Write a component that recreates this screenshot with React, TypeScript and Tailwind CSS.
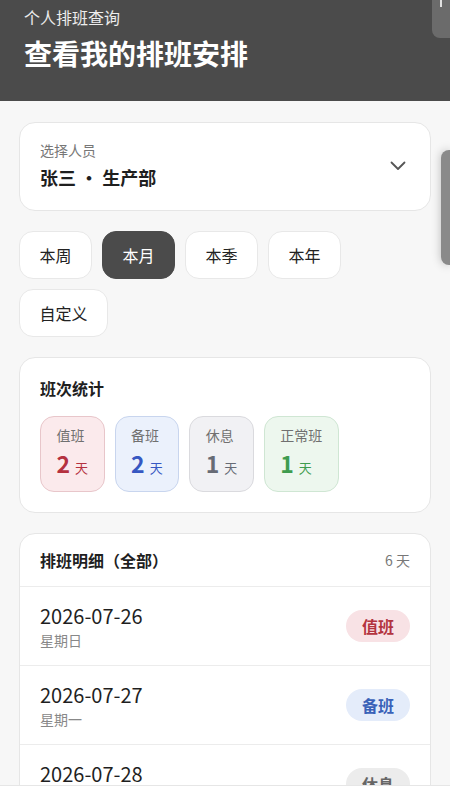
import { useState } from 'react'

const font = { fontFamily: '"Noto Sans CJK SC", "Noto Sans", sans-serif' }

const ranges = ['本周', '本月', '本季', '本年', '自定义']

const stats = [
  { label: '值班', count: 2, box: 'bg-[#fbeaec] border-[#e8c6ca]', num: 'text-[#b5313f]', unit: 'text-[#b5313f]' },
  { label: '备班', count: 2, box: 'bg-[#ebf1fc] border-[#c8d5ee]', num: 'text-[#3658c2]', unit: 'text-[#3658c2]' },
  { label: '休息', count: 1, box: 'bg-[#f1f1f4] border-[#dadade]', num: 'text-[#676b75]', unit: 'text-[#676b75]' },
  { label: '正常班', count: 1, box: 'bg-[#edf7ee] border-[#cfe6d3]', num: 'text-[#3f9c4f]', unit: 'text-[#3f9c4f]' },
]

const rows = [
  { date: '2026-07-26', week: '星期日', type: '值班', badge: 'bg-[#f8e2e5] text-[#b3343f]' },
  { date: '2026-07-27', week: '星期一', type: '备班', badge: 'bg-[#e4ecfa] text-[#3a62b8]' },
  { date: '2026-07-28', week: '星期二', type: '休息', badge: 'bg-[#ececec] text-[#666666]' },
  { date: '2026-07-29', week: '星期三', type: '正常班', badge: 'bg-[#e6f4e8] text-[#3f9c4f]' },
]

export default function App() {
  const [range, setRange] = useState('本月')

  return (
    <div className="min-h-screen bg-[#f7f7f7] pb-10" style={font}>
      {/* header */}
      <div className="bg-[#4b4b4b] px-6 pt-[5px] pb-[30px]">
        <p className="text-[16px] leading-6 text-white/90">个人排班查询</p>
        <h1 className="mt-1.5 text-[28px] leading-9 font-bold text-white">查看我的排班安排</h1>
      </div>

      <div className="flex flex-col gap-5 px-[19px] pt-[21px]">
        {/* person select */}
        <div className="flex items-center justify-between rounded-2xl border border-[#e6e6e6] bg-white pt-[17px] pb-[19px] pl-5 pr-6">
          <div>
            <p className="text-[14px] leading-5 text-[#777777]">选择人员</p>
            <p className="mt-[3px] text-[18px] leading-7 font-bold text-[#1f1f1f]">张三 · 生产部</p>
          </div>
          <svg width="16" height="10" viewBox="0 0 16 10" fill="none">
            <path d="M1.5 1.5 8 8l6.5-6.5" stroke="#555" strokeWidth="1.8" strokeLinecap="round" strokeLinejoin="round" />
          </svg>
        </div>

        {/* range tabs */}
        <div className="flex flex-wrap gap-[10px]">
          {ranges.map((r) => (
            <button
              key={r}
              onClick={() => setRange(r)}
              className={
                r === range
                  ? 'rounded-[14px] border border-[#4b4b4b] bg-[#4b4b4b] px-[19.5px] py-[11px] text-[16px] leading-6 text-white'
                  : 'rounded-[14px] border border-[#e8e8e8] bg-white px-[19.5px] py-[11px] text-[16px] leading-6 text-[#222222]'
              }
            >
              {r}
            </button>
          ))}
        </div>

        {/* stats */}
        <div className="rounded-2xl border border-[#e6e6e6] bg-white px-5 pt-[18px] pb-5">
          <p className="text-[16px] leading-6 font-bold text-[#1f1f1f]">班次统计</p>
          <div className="mt-4 flex gap-[10px]">
            {stats.map((s) => (
              <div key={s.label} className={`flex h-[76px] flex-col rounded-[14px] border px-[15.5px] pt-2 ${s.box}`}>
                <p className="text-[14px] leading-5 text-[#707070]">{s.label}</p>
                <div className="mt-1 flex h-7 items-baseline gap-[5px]">
                  <span className={`text-[23px] leading-7 font-bold ${s.num}`}>{s.count}</span>
                  <span className={`text-[13px] leading-7 ${s.unit}`}>天</span>
                </div>
              </div>
            ))}
          </div>
        </div>

        {/* detail list */}
        <div className="overflow-hidden rounded-2xl border border-[#e6e6e6] bg-white">
          <div className="flex h-[53px] items-center justify-between border-b border-[#ececec] px-5">
            <p className="text-[16px] font-bold text-[#1f1f1f]">排班明细（全部）</p>
            <p className="text-[14px] text-[#777777]">6 天</p>
          </div>
          {rows.map((row) => (
            <div key={row.date} className="flex items-center justify-between border-b border-[#ececec] px-5 py-[15px]">
              <div>
                <p className="text-[20px] leading-7 text-[#1f1f1f]">{row.date}</p>
                <p className="text-[14px] leading-5 text-[#888888]">{row.week}</p>
              </div>
              <span className={`rounded-full px-4 py-1 text-[16px] leading-6 font-bold ${row.badge}`}>{row.type}</span>
            </div>
          ))}
        </div>
      </div>

      {/* floating bits on the right edge */}
      <div className="fixed top-0 right-0 h-[38px] w-[18px] rounded-bl-lg bg-[#6b6b6b]">
        <div className="ml-[8px] h-[7px] w-[2px] bg-white/80" />
      </div>
      <div className="fixed top-[150px] right-0 h-[115px] w-[9px] rounded-l-lg bg-[#8a8a8a] shadow-[0_0_10px_rgba(0,0,0,0.25)]" />

      {/* bottom bar */}
      <div className="fixed bottom-0 left-0 right-0 h-[15px] border-t border-[#e6e6e6] bg-white" />
    </div>
  )
}
